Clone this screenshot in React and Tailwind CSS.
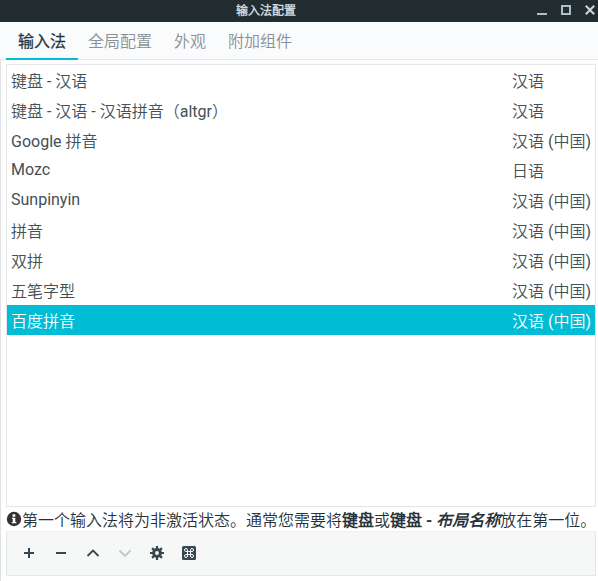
import React from "react";

const tabs = ["输入法", "全局配置", "外观", "附加组件"];

const rows = [
  ["键盘 - 汉语", "汉语"],
  ["键盘 - 汉语 - 汉语拼音（altgr）", "汉语"],
  ["Google 拼音", "汉语 (中国)"],
  ["Mozc", "日语"],
  ["Sunpinyin", "汉语 (中国)"],
  ["拼音", "汉语 (中国)"],
  ["双拼", "汉语 (中国)"],
  ["五笔字型", "汉语 (中国)"],
  ["百度拼音", "汉语 (中国)"],
];

const selected = 8;

function TitleBar() {
  return (
    <header className="relative flex h-[22px] shrink-0 items-center justify-end bg-[#222d32] text-[#b0bec5]">
      <h1 className="absolute left-[236px] top-px text-[12px] leading-[20px] font-bold text-[#cfd8dc]">输入法配置</h1>
      <svg width="64" height="22" viewBox="0 0 64 22" fill="none" stroke="currentColor" strokeWidth="2">
        <path d="M3 14h10" />
        <path d="M28 6h8v8h-8z" />
        <path d="M51.8 5.8l8.4 8.4M60.2 5.8l-8.4 8.4" stroke="#cfd8dc" />
      </svg>
    </header>
  );
}

function Tabs() {
  return (
    <nav className="flex h-[38px] shrink-0 border-b border-[#e4e6e7] bg-[#fafbfd] pl-[6px]">
      {tabs.map((t, i) => (
        <div
          key={t}
          className={
            i === 0
              ? "-mb-px mr-[10px] h-[38px] border-b-2 border-[#00bcd4] px-[12px] pt-[8px] text-[#263238] [-webkit-text-stroke:0.35px_#263238]"
              : "mr-[22px] pt-[8px] text-[#899094]"
          }
        >
          {t}
        </div>
      ))}
    </nav>
  );
}

function Toolbar() {
  return (
    <div className="mr-[2px] h-[45px] shrink-0 border border-[#e4e6e7] border-t-[#f0f2f2] bg-[#f6f8f8] text-[#37474f]">
      <svg width="208" height="43" viewBox="7 532 208 43" fill="none" stroke="currentColor" strokeWidth="2">
        <path d="M24 553h10M29 548v10" />
        <path d="M56 553h10" />
        <path d="M87.500 556l5.500-5.500 5.500 5.500" strokeWidth="1.800" />
        <path d="M119.500 550.500l5.500 5.500 5.500-5.500" stroke="#c2c6c8" strokeWidth="1.800" />
        <circle cx="157" cy="553" r="3.400" strokeWidth="3" />
        <path
          d="M157 546v3M157 557v3M150 553h3M161 553h3M152.100 548.100l2 2M159.900 555.900l2 2M161.900 548.100l-2 2M154.100 555.900l-2 2"
          strokeWidth="2.200"
        />
        <rect x="182" y="546" width="14" height="14" rx="1.500" fill="currentColor" stroke="none" />
        <path
          d="M187.500 551.500h3v3h-3zM187.500 551.500h-1.500a1.500 1.500 0 1 1 1.500-1.500zM190.500 551.500v-1.500a1.500 1.500 0 1 1 1.500 1.500zM190.500 554.500h1.500a1.500 1.500 0 1 1-1.500 1.500zM187.500 554.500v1.500a1.500 1.500 0 1 1-1.500-1.500z"
          stroke="#f6f8f8"
          strokeWidth="1"
        />
      </svg>
    </div>
  );
}

export default function App() {
  return (
    <div
      lang="zh-CN"
      className="flex h-[581px] w-[598px] flex-col overflow-hidden bg-white font-[Roboto,'Noto_Sans_CJK_SC_DemiLight','Noto_Sans_CJK_SC',sans-serif] text-[16px] leading-[24px] text-[#435056]"
    >
      <TitleBar />
      <Tabs />
      <main className="flex flex-1 flex-col border-l border-[#dfe3e5] pl-[5px] pt-[4px]">
        <div className="mr-[2px] h-[443px] shrink-0 border border-[#e4e6e7]">
          {rows.map(([name, lang], i) => (
            <div
              key={i}
              className={
                i === selected
                  ? "flex h-[30px] bg-[#00bcd4] pl-[4px] text-white"
                  : "flex h-[30px] pl-[4px]"
              }
            >
              <span
                className={
                  /^[A-Za-z]+$/.test(name)
                    ? "w-[501px] pt-[3px] whitespace-nowrap"
                    : "w-[501px] pt-[5px] whitespace-nowrap"
                }
              >
                {name}
              </span>
              <span className="pt-[5px] whitespace-nowrap">{lang}</span>
            </div>
          ))}
        </div>
        <div className="flex h-[24px] shrink-0 text-[#263238]">
          <svg className="mt-[4px] shrink-0" width="16" height="16" viewBox="0 0 16 16">
            <circle cx="8" cy="8" r="7.200" fill="#333333" />
            <path d="M6.600 3.300h2.700v2.400H6.600zM6 6.700h3.300v4.300h1v1.300H5.800V11h1V8H6z" fill="#fff" />
          </svg>
          <p className="pt-[2px] whitespace-nowrap">
            第一个输入法将为非激活状态。通常您需要将<b>键盘</b>或<b>键盘 - <i>布局名称</i></b>放在第一位。
          </p>
        </div>
        <Toolbar />
      </main>
    </div>
  );
}
